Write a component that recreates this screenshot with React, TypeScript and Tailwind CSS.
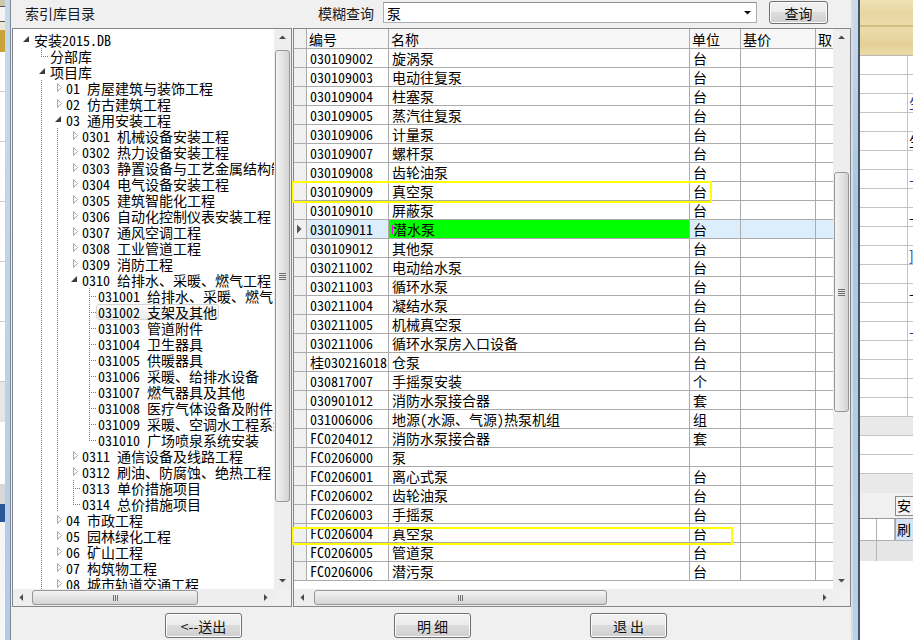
import React from 'react';

type Cell = 'none' | 'v' | 'mid' | 'end' | 'open' | 'closed';

type TreeRow = { cells: Cell[]; text: string; hl?: boolean };

const mk = (cells: Cell[], text: string, hl = false): TreeRow => ({ cells, text, hl });

const tree: TreeRow[] = [
  mk(['open'], '安装2015.DB'),
  mk(['none', 'end'], '分部库'),
  mk(['none', 'open'], '项目库'),
  mk(['none', 'v', 'closed'], '01 房屋建筑与装饰工程'),
  mk(['none', 'v', 'closed'], '02 仿古建筑工程'),
  mk(['none', 'v', 'open'], '03 通用安装工程'),
  mk(['none', 'v', 'v', 'closed'], '0301 机械设备安装工程'),
  mk(['none', 'v', 'v', 'closed'], '0302 热力设备安装工程'),
  mk(['none', 'v', 'v', 'closed'], '0303 静置设备与工艺金属结构制作安装工程'),
  mk(['none', 'v', 'v', 'closed'], '0304 电气设备安装工程'),
  mk(['none', 'v', 'v', 'closed'], '0305 建筑智能化工程'),
  mk(['none', 'v', 'v', 'closed'], '0306 自动化控制仪表安装工程'),
  mk(['none', 'v', 'v', 'closed'], '0307 通风空调工程'),
  mk(['none', 'v', 'v', 'closed'], '0308 工业管道工程'),
  mk(['none', 'v', 'v', 'closed'], '0309 消防工程'),
  mk(['none', 'v', 'v', 'open'], '0310 给排水、采暖、燃气工程'),
  mk(['none', 'v', 'v', 'none', 'mid'], '031001 给排水、采暖、燃气管道'),
  mk(['none', 'v', 'v', 'none', 'mid'], '031002 支架及其他', true),
  mk(['none', 'v', 'v', 'none', 'mid'], '031003 管道附件'),
  mk(['none', 'v', 'v', 'none', 'mid'], '031004 卫生器具'),
  mk(['none', 'v', 'v', 'none', 'mid'], '031005 供暖器具'),
  mk(['none', 'v', 'v', 'none', 'mid'], '031006 采暖、给排水设备'),
  mk(['none', 'v', 'v', 'none', 'mid'], '031007 燃气器具及其他'),
  mk(['none', 'v', 'v', 'none', 'mid'], '031008 医疗气体设备及附件'),
  mk(['none', 'v', 'v', 'none', 'mid'], '031009 采暖、空调水工程系统调试'),
  mk(['none', 'v', 'v', 'none', 'end'], '031010 广场喷泉系统安装'),
  mk(['none', 'v', 'v', 'closed'], '0311 通信设备及线路工程'),
  mk(['none', 'v', 'v', 'closed'], '0312 刷油、防腐蚀、绝热工程'),
  mk(['none', 'v', 'v', 'mid'], '0313 单价措施项目'),
  mk(['none', 'v', 'v', 'end'], '0314 总价措施项目'),
  mk(['none', 'v', 'closed'], '04 市政工程'),
  mk(['none', 'v', 'closed'], '05 园林绿化工程'),
  mk(['none', 'v', 'closed'], '06 矿山工程'),
  mk(['none', 'v', 'closed'], '07 构筑物工程'),
  mk(['none', 'v', 'closed'], '08 城市轨道交通工程'),
];

const rows: [string, string, string][] = [
  ['030109002', '旋涡泵', '台'],
  ['030109003', '电动往复泵', '台'],
  ['030109004', '柱塞泵', '台'],
  ['030109005', '蒸汽往复泵', '台'],
  ['030109006', '计量泵', '台'],
  ['030109007', '螺杆泵', '台'],
  ['030109008', '齿轮油泵', '台'],
  ['030109009', '真空泵', '台'],
  ['030109010', '屏蔽泵', '台'],
  ['030109011', '潜水泵', '台'],
  ['030109012', '其他泵', '台'],
  ['030211002', '电动给水泵', '台'],
  ['030211003', '循环水泵', '台'],
  ['030211004', '凝结水泵', '台'],
  ['030211005', '机械真空泵', '台'],
  ['030211006', '循环水泵房入口设备', '台'],
  ['桂030216018', '仓泵', '台'],
  ['030817007', '手摇泵安装', '个'],
  ['030901012', '消防水泵接合器', '套'],
  ['031006006', '地源(水源、气源)热泵机组', '组'],
  ['FC0204012', '消防水泵接合器', '套'],
  ['FC0206000', '泵', ''],
  ['FC0206001', '离心式泵', '台'],
  ['FC0206002', '齿轮油泵', '台'],
  ['FC0206003', '手摇泵', '台'],
  ['FC0206004', '真空泵', '台'],
  ['FC0206005', '管道泵', '台'],
  ['FC0206006', '潜污泵', '台'],
];

const SELECTED = 9;

const dotsV = 'bg-[repeating-linear-gradient(to_bottom,#7a7a7a_0px,#7a7a7a_1px,transparent_1px,transparent_2px)]';
const dotsH = 'bg-[repeating-linear-gradient(to_right,#7a7a7a_0px,#7a7a7a_1px,transparent_1px,transparent_2px)]';

// one 16px column of the tree: guide line, leaf stub or expander
function TreeIcon({ kind }: { kind: Cell }) {
  if (kind === 'open' || kind === 'closed') {
    return (
      <svg width="16" height="16" viewBox="0 0 16 16" className="shrink-0">
        {kind === 'closed' && <polygon points="8.5,3.5 12.5,7.5 8.5,11.5" fill="#ffffff" stroke="#a6a6a6" />}
        {kind === 'open' && <polygon points="12,4 12,10 6,10" fill="#3c3c3c" />}
      </svg>
    );
  }
  return (
    <div className="flex h-[16px] w-[16px] shrink-0 flex-row">
      <div className="w-[8px]" />
      {kind === 'v' || kind === 'mid' ? <div className={`h-[16px] w-px ${dotsV}`} /> : null}
      {kind === 'end' ? <div className={`h-[9px] w-px ${dotsV}`} /> : null}
      {kind === 'mid' || kind === 'end' ? (
        <div className="flex flex-col pl-[1px] pt-[8px]">
          <div className={`h-px w-[6px] ${dotsH}`} />
        </div>
      ) : null}
    </div>
  );
}

function Arrow({ dir }: { dir: 'up' | 'down' | 'left' | 'right' }) {
  const pts = {
    up: '5,10 8.5,6.5 12,10',
    down: '5,7 12,7 8.5,10.5',
    left: '10,5 10,12 6.5,8.5',
    right: '7,5 7,12 10.5,8.5',
  }[dir];
  return (
    <svg width="17" height="17" viewBox="0 0 17 17">
      <polygon points={pts} fill="#4a4a4a" />
    </svg>
  );
}

function VScroll({ before, thumb }: { before: string; thumb: string }) {
  return (
    <div className="flex w-[17px] shrink-0 flex-col bg-[#eeeeee]">
      <Arrow dir="up" />
      <div className="flex flex-1 flex-col overflow-hidden">
        <div className={before} />
        <div
          className={`${thumb} mx-[1px] flex items-center justify-center rounded-[3px] border border-[#979797] bg-gradient-to-r from-[#f4f4f4] to-[#d4d4d4]`}
        >
          <div className="flex flex-col gap-[1px]">
            <div className="h-px w-[7px] bg-[#6e6e6e]" />
            <div className="h-px w-[7px] bg-[#6e6e6e]" />
            <div className="h-px w-[7px] bg-[#6e6e6e]" />
            <div className="h-px w-[7px] bg-[#6e6e6e]" />
          </div>
        </div>
      </div>
      <Arrow dir="down" />
    </div>
  );
}

function HScroll({ before, thumb }: { before: string; thumb: string }) {
  return (
    <div className="flex h-[17px] flex-1 flex-row bg-[#eeeeee]">
      <Arrow dir="left" />
      <div className="flex flex-1 flex-row overflow-hidden">
        <div className={before} />
        <div
          className={`${thumb} my-[1px] flex items-center justify-center rounded-[3px] border border-[#979797] bg-gradient-to-b from-[#f4f4f4] to-[#d4d4d4]`}
        >
          <div className="flex flex-row gap-[1px]">
            <div className="h-[6px] w-px bg-[#6e6e6e]" />
            <div className="h-[6px] w-px bg-[#6e6e6e]" />
            <div className="h-[6px] w-px bg-[#6e6e6e]" />
          </div>
        </div>
      </div>
      <Arrow dir="right" />
    </div>
  );
}

function Btn({ children, className }: { children: React.ReactNode; className: string }) {
  return (
    <button
      className={`${className} flex items-center justify-center rounded-[3px] border border-[#707070] bg-[linear-gradient(#f2f2f2,#ebebeb_50%,#dddddd_50%,#cfcfcf)] text-[14px] leading-none text-[#111] shadow-[inset_0_0_0_1px_#fcfcfc]`}
    >
      {children}
    </button>
  );
}

function TreePanel() {
  return (
    <div className="ml-[1px] flex h-[579px] w-[280px] flex-col border border-[#828790] bg-white">
      <div className="flex h-[560px] flex-row">
        <div className="flex-1 overflow-hidden pl-[4px] pt-[3px] font-['Noto_Sans_Mono_CJK_SC','Noto_Sans_CJK_SC',monospace] text-[14px] leading-[16px] text-black">
          {tree.map((r, i) => (
            <div key={i} className="flex h-[16px] flex-row items-center whitespace-nowrap">
              {r.cells.map((c, j) => (
                <TreeIcon key={j} kind={c} />
              ))}
              {r.hl ? (
                <span className="-ml-[1px] h-[16px] rounded-[3px] border border-[#d5d5d5] bg-gradient-to-b from-[#fbfbfb] to-[#ececec] px-[1px] leading-[14px]">
                  {r.text}
                </span>
              ) : (
                <span className="ml-[1px]">{r.text}</span>
              )}
            </div>
          ))}
        </div>
        <VScroll before="h-[4px]" thumb="h-[452px]" />
      </div>
      <div className="flex h-[17px] flex-row">
        <HScroll before="w-[2px]" thumb="w-[166px]" />
        <div className="w-[17px] bg-[#f0f0f0]" />
      </div>
    </div>
  );
}

function GridPanel() {
  return (
    <div className="relative ml-[1px] flex h-[579px] w-[558px] flex-col border border-[#828790] bg-white">
      <div className="flex h-[560px] flex-row">
        <div className="flex w-[539px] flex-col overflow-hidden font-['Noto_Sans_Mono_CJK_SC','Noto_Sans_CJK_SC',monospace] text-[14px] leading-[18px] text-black">
          <div className="flex h-[20px] shrink-0 flex-row border-b border-[#ababab] bg-[#f7f7f7]">
            <div className="w-[13px] shrink-0 border-r border-[#ababab] bg-[#f0f0f0]" />
            <div className="w-[82px] shrink-0 border-r border-[#ababab] pl-[2px] pt-[1px]">编号</div>
            <div className="w-[301px] shrink-0 border-r border-[#ababab] pl-[2px] pt-[1px]">名称</div>
            <div className="w-[51px] shrink-0 border-r border-[#ababab] pl-[2px] pt-[1px]">单位</div>
            <div className="w-[75px] shrink-0 border-r border-[#ababab] pl-[2px] pt-[1px]">基价</div>
            <div className="w-[17px] shrink-0 overflow-hidden whitespace-nowrap pl-[2px] pt-[1px]">取</div>
          </div>
          {rows.map((r, i) => {
            const sel = i === SELECTED;
            return (
              <div
                key={r[0] + i}
                className={`flex h-[19px] shrink-0 flex-row items-center border-b border-[#ababab] ${sel ? 'bg-[#dcedfc]' : 'bg-white'}`}
              >
                <div className="flex h-full w-[13px] shrink-0 items-center border-r border-[#ababab] bg-[#f0f0f0]">
                  {sel && (
                    <svg width="12" height="18" viewBox="0 0 12 18">
                      <polygon points="3,4.5 7.5,9 3,13.5" fill="#555555" />
                    </svg>
                  )}
                </div>
                <div className="h-full w-[82px] shrink-0 overflow-hidden whitespace-nowrap border-r border-[#ababab] pl-[3px]">
                  {r[0]}
                </div>
                <div
                  className={`flex h-full w-[301px] shrink-0 flex-row items-center overflow-hidden whitespace-nowrap border-r border-[#ababab] pl-[3px] ${sel ? 'bg-[#00ff00]' : ''}`}
                >
                  {sel && <div className="h-[9px] w-px bg-[#ff00ff]" />}
                  <span>{r[1]}</span>
                </div>
                <div className="h-full w-[51px] shrink-0 border-r border-[#ababab] pl-[3px]">{r[2]}</div>
                <div className="h-full w-[75px] shrink-0 border-r border-[#ababab]" />
                <div className="h-full w-[17px] shrink-0" />
              </div>
            );
          })}
        </div>
        <VScroll before="h-[126px]" thumb="h-[240px]" />
      </div>
      <div className="flex h-[17px] flex-row">
        <HScroll before="w-[3px]" thumb="w-[293px]" />
        <div className="w-[17px] bg-[#f0f0f0]" />
      </div>
      {/* yellow marks over rows */}
      <div className="absolute left-[-2px] top-[152px] h-[22px] w-[420px] border-2 border-[#ffff00]" />
      <div className="absolute left-[-2px] top-[498px] h-[18px] w-[441px] border-2 border-[#ffff00]" />
    </div>
  );
}

function LeftStrip() {
  return (
    <div className="flex w-[5px] flex-col bg-white">
      <div className="h-[6px] bg-[#cfc7b0]" />
      <div className="h-[16px] border-y border-[#555] bg-[#f4f4f4]" />
      <div className="h-[8px] bg-[#ece9d8]" />
      <div className="h-[22px] bg-[#c9a23a]" />
      <div className="h-[40px] border-b border-[#c8c8c8]" />
      <div className="h-[50px] border-b border-[#c8c8c8]" />
      <div className="h-[60px] border-b border-[#c8c8c8]" />
      <div className="h-[60px] border-b border-[#c8c8c8]" />
      <div className="h-[60px] border-b border-[#c8c8c8]" />
      <div className="h-[60px] border-b border-[#c8c8c8]" />
      <div className="h-[40px] bg-[#e6e6e6]" />
      <div className="h-[62px]" />
      <div className="h-[20px] bg-[#d8d8d8]" />
      <div className="h-[18px] bg-[#2b5797]" />
      <div className="flex-1 bg-[#f6f6f6]" />
    </div>
  );
}

function RightApp() {
  const marks: Record<number, [string, string]> = {
    2: ['生', 'text-[#1c2f9c]'],
    4: ['生', 'text-black'],
    6: ['-', 'text-[#1c2f9c]'],
    8: ['-', 'text-black'],
    10: [']', 'text-[#1c2f9c]'],
    12: ['-', 'text-black'],
    14: ['-', 'text-[#1c2f9c]'],
  };
  return (
    <div className="flex w-[53px] flex-col overflow-hidden bg-white font-['Noto_Sans_CJK_SC',sans-serif] text-[14px]">
      <div className="h-[25px] bg-[linear-gradient(180deg,#efe3b6,#e7d6a2_50%,#ecdcaa)]" />
      <div className="h-[2px] bg-[#d4bd82]" />
      <div className="h-[29px] border-b border-[#b8b8b8] bg-[linear-gradient(180deg,#ecdcab,#e4d197_60%,#eadaa8)]" />
      {Array.from({ length: 19 }).map((_, k) => (
        <div key={k} className="flex h-[19px] shrink-0 flex-row border-b border-[#c4c4c4]">
          <div className="w-[48px] shrink-0 border-r border-[#c4c4c4]" />
          <div className={`whitespace-nowrap pl-[1px] leading-[18px] ${marks[k] ? marks[k][1] : ''}`}>
            {marks[k] ? marks[k][0] : ''}
          </div>
        </div>
      ))}
      <div className="h-[19px] shrink-0 border-b border-[#c4c4c4] bg-[#e9e9e9]" />
      <div className="h-[19px] shrink-0 border-b border-[#c4c4c4]" />
      <div className="h-[19px] shrink-0 border-b border-[#c4c4c4]" />
      <div className="h-[19px] shrink-0 bg-[#e9e9e9]" />
      <div className="flex h-[26px] shrink-0 flex-row items-center border-b border-[#9a9a9a] bg-[#f0f0f0]">
        <div className="w-[35px] shrink-0" />
        <div className="flex h-[20px] w-[20px] shrink-0 items-center border border-[#8a8a8a] bg-[#f4f4f4] pl-[1px] text-black">
          安
        </div>
      </div>
      <div className="flex h-[22px] shrink-0 flex-row border-b border-[#b0b0b0]">
        <div className="w-[17px] shrink-0 border-r border-[#b0b0b0]" />
        <div className="w-[18px] shrink-0 border-r border-[#b0b0b0]" />
        <div className="flex w-[20px] shrink-0 items-center border-l border-[#9aa8c0] bg-[#d6e4f6] pl-[1px] text-black">
          刷
        </div>
      </div>
      <div className="flex h-[20px] shrink-0 flex-row bg-[#e6e6e6]">
        <div className="w-[17px] shrink-0 border-r border-[#b8b8b8]" />
      </div>
      <div className="flex-1 bg-white" />
    </div>
  );
}

export default function App() {
  return (
    <div className="flex h-[640px] w-[913px] flex-row overflow-hidden bg-[#f0f0f0] font-['Noto_Sans_CJK_SC',sans-serif]">
      <LeftStrip />
      <div className="w-[5px] bg-gradient-to-b from-[#c9d9ec] to-[#b3cbe6]" />
      <div className="w-px bg-[#7c8794]" />

      {/* dialog */}
      <div className="flex w-[840px] flex-col bg-[#f0f0f0]">
        <div className="flex h-[28px] flex-row items-start text-[14px] leading-[20px] text-[#1a1a1a]">
          <div className="w-[307px] pl-[14px] pt-[3px]">索引库目录</div>
          <div className="w-[65px] pt-[3px]">模糊查询</div>
          <div className="mt-[2px] flex h-[21px] w-[374px] flex-row items-center justify-between border border-[#abadb3] border-t-[#8e9197] bg-white pl-[3px] pr-[3px]">
            <span className="leading-none text-black">泵</span>
            <svg width="11" height="11" viewBox="0 0 11 11">
              <polygon points="2,4 9,4 5.5,7.5" fill="#111" />
            </svg>
          </div>
          <Btn className="ml-[12px] mt-[1px] h-[23px] w-[59px]">查询</Btn>
        </div>

        <div className="flex flex-row">
          <TreePanel />
          <GridPanel />
        </div>

        <div className="flex flex-1 flex-row pt-[6px]">
          <Btn className="ml-[154px] h-[25px] w-[77px]">{'<--送出'}</Btn>
          <Btn className="ml-[152px] h-[25px] w-[77px]">明 细</Btn>
          <Btn className="ml-[119px] h-[25px] w-[77px]">退 出</Btn>
        </div>
      </div>

      {/* right frame */}
      <div className="w-[2px] bg-[#dcdcdc]" />
      <div className="w-[5px] bg-[linear-gradient(180deg,#c7dcf2,#a6c6ea_30%,#b6d2f0)]" />
      <div className="w-[2px] bg-[#4a5563]" />
      <RightApp />
    </div>
  );
}
